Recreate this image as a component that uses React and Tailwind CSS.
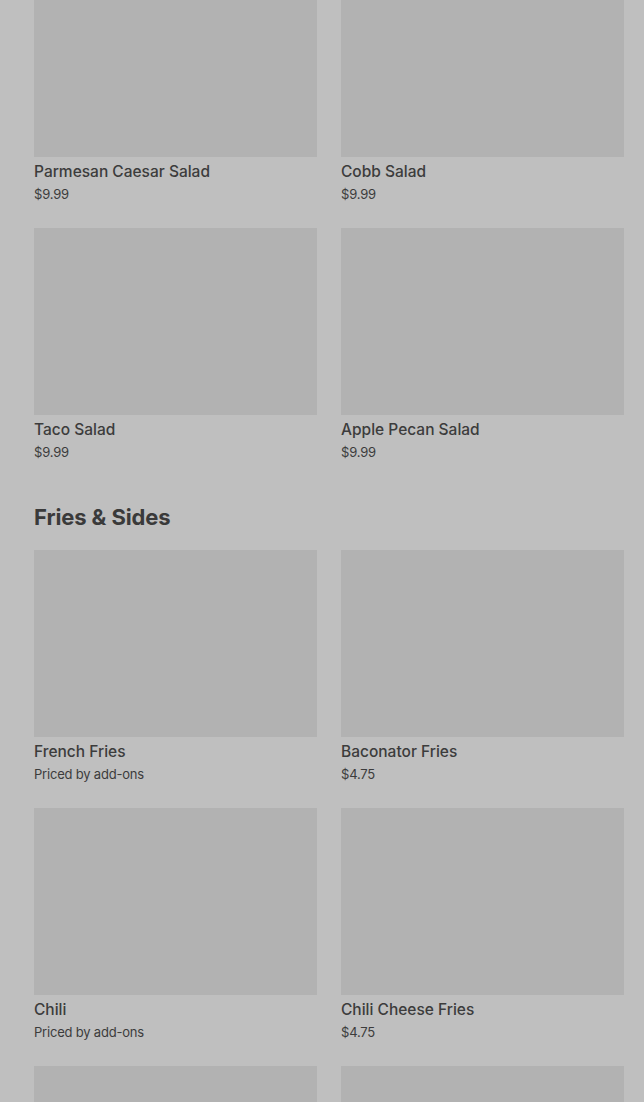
const salads = [
  { name: 'Parmesan Caesar Salad', price: '$9.99' },
  { name: 'Cobb Salad', price: '$9.99' },
  { name: 'Taco Salad', price: '$9.99' },
  { name: 'Apple Pecan Salad', price: '$9.99' },
]

const sides = [
  { name: 'French Fries', price: 'Priced by add-ons' },
  { name: 'Baconator Fries', price: '$4.75' },
  { name: 'Chili', price: 'Priced by add-ons' },
  { name: 'Chili Cheese Fries', price: '$4.75' },
  { name: '', price: '' },
  { name: '', price: '' },
]

function ItemCard({ name, price }) {
  return (
    <div className="flex flex-col">
      <div className="h-[187px] bg-[#b2b2b2]" />
      <p className="mt-[5px] text-[15.5px] leading-5 font-medium text-[#3c3c3c]">{name}</p>
      <p className="mt-[3px] text-[13px] leading-[18px] tracking-[-0.2px] text-[#3c3c3c]">{price}</p>
    </div>
  )
}

export default function App() {
  return (
    <div
      className="h-[1102px] overflow-hidden bg-[#bfbfbf]"
      style={{ fontFamily: 'Inter, "Liberation Sans", sans-serif' }}
    >
      <div className="-mt-[30px] pl-[34px] pr-[20px]">
        {/* Salads */}
        <div className="grid grid-cols-2 gap-x-6 gap-y-[25px]">
          {salads.map((item) => (
            <ItemCard key={item.name} {...item} />
          ))}
        </div>

        {/* Fries & Sides */}
        <h2 className="mt-[42px] mb-[19px] text-[22px] leading-7 font-bold tracking-[-0.1px] text-[#3a3a3a]">
          Fries &amp; Sides
        </h2>
        <div className="grid grid-cols-2 gap-x-6 gap-y-[25px]">
          {sides.map((item, i) => (
            <ItemCard key={i} {...item} />
          ))}
        </div>
      </div>
    </div>
  )
}
